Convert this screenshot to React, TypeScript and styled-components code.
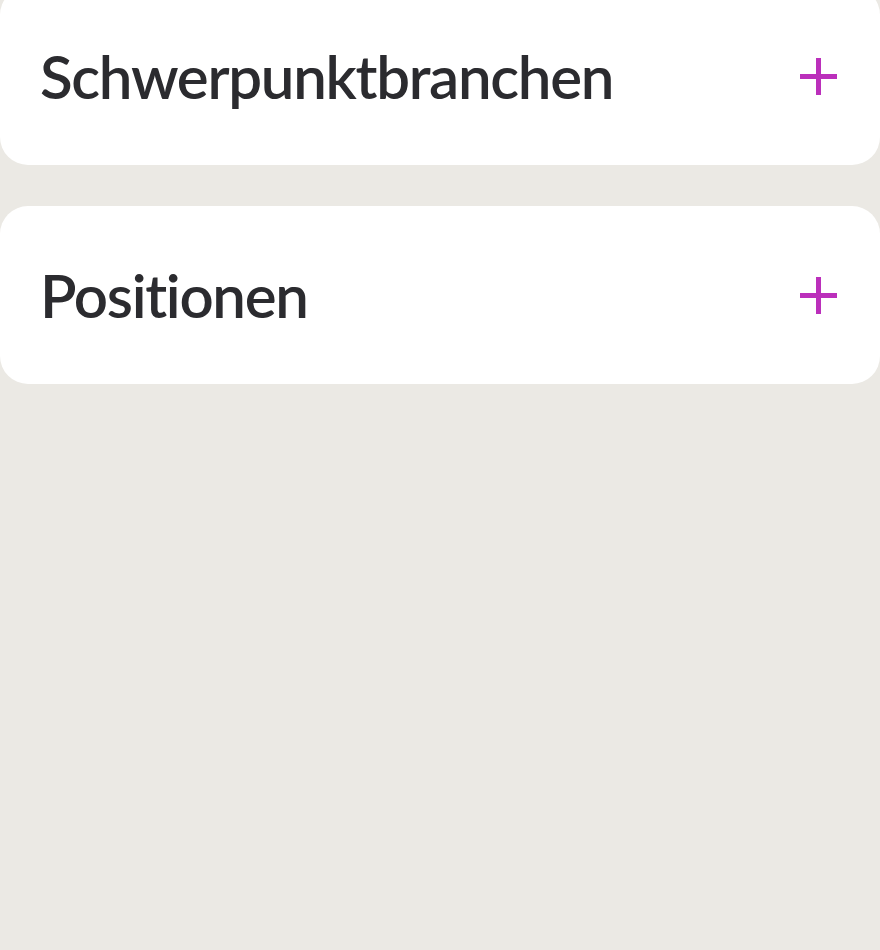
import React from "react";
import styled, { createGlobalStyle } from "styled-components";

const GlobalStyle = createGlobalStyle`
  html, body {
    margin: 0;
    padding: 0;
    background: #ebe9e4;
  }
  body {
    font-family: Lato, "Noto Sans", sans-serif;
  }
`;

const Page = styled.main`
  min-height: 950px;
  background: #ebe9e4;
  overflow: hidden;
`;

const List = styled.section`
  display: flex;
  flex-direction: column;
  gap: 41px;
  margin-top: -13px;
`;

const Card = styled.div`
  display: flex;
  align-items: center;
  justify-content: space-between;
  height: 178px;
  padding: 0 43px 0 40px;
  box-sizing: border-box;
  background: #ffffff;
  border-radius: 28px;
`;

const Title = styled.h2`
  margin: 0;
  font-family: Lato, "Noto Sans", sans-serif;
  font-size: 60px;
  font-weight: 600;
  color: #2b2b2f;
  letter-spacing: -1.3px;
`;

const PlusButton = styled.button`
  display: flex;
  align-items: center;
  justify-content: center;
  width: 37px;
  height: 37px;
  padding: 0;
  border: none;
  background: none;
  cursor: pointer;
`;

function Plus() {
  return (
    <svg width="37" height="37" viewBox="0 0 37 37">
      <rect x="16" y="0" width="5" height="37" fill="#bb2fbb" />
      <rect x="0" y="16" width="37" height="5" fill="#bb2fbb" />
    </svg>
  );
}

const sections = ["Schwerpunktbranchen", "Positionen"];

function App() {
  return (
    <Page>
      <GlobalStyle />
      <List>
        {sections.map((name) => (
          <Card key={name}>
            <Title>{name}</Title>
            <PlusButton aria-label={name + " öffnen"}>
              <Plus />
            </PlusButton>
          </Card>
        ))}
      </List>
    </Page>
  );
}

export default App;
